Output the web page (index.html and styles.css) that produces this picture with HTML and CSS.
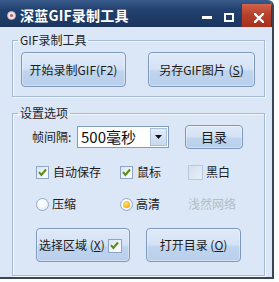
FILE: index.html
```html
<!DOCTYPE html>
<html lang="zh-CN">
<head>
<meta charset="utf-8">
<title>深蓝GIF录制工具</title>
<link rel="stylesheet" href="styles.css">
</head>
<body>
<div class="window">
  <div class="titlebar">
    <svg class="app-icon" width="9" height="9" viewBox="0 0 9 9"><circle cx="4.5" cy="4.5" r="4" fill="#e9e4e6" stroke="#b9b1b5" stroke-width="0.8"/><circle cx="4.5" cy="4.5" r="1.6" fill="#d2517a"/></svg>
    <span class="title">深蓝GIF录制工具</span>
    <div class="controls">
      <span class="ctl min"><svg width="10" height="3" viewBox="0 0 10 3"><rect width="10" height="3" fill="#fff"/></svg></span>
      <span class="ctl max"><svg width="10" height="9" viewBox="0 0 10 9"><rect x="1" y="1" width="8" height="7" fill="none" stroke="#fff" stroke-width="2"/></svg></span>
      <span class="ctl close"><svg width="10" height="10" viewBox="0 0 10 10"><path d="M1 1 L9 9 M9 1 L1 9" stroke="#fff" stroke-width="2.4" stroke-linecap="square"/></svg></span>
    </div>
  </div>
  <div class="client">
    <fieldset class="group g1">
      <legend>GIF录制工具</legend>
      <div class="rec-row">
        <button class="btn btn-rec">开始录制GIF(F2)</button>
        <button class="btn btn-save">另存GIF图片 (<u>S</u>)</button>
      </div>
    </fieldset>
    <fieldset class="group g2">
      <legend>设置选项</legend>
      <div class="interval-row">
        <span class="field-label">帧间隔:</span>
        <div class="combo">
          <span class="combo-value">500毫秒</span>
          <span class="combo-arrow"><svg width="7" height="4" viewBox="0 0 7 4"><path d="M0 0 H7 L3.5 4 Z" fill="#111"/></svg></span>
        </div>
        <button class="btn btn-dir">目录</button>
      </div>
      <div class="opt-row">
        <label class="opt"><span class="cb"><svg width="11" height="11" viewBox="0 0 11 11"><path d="M2 5.2 L4.4 8 L9 2.5" fill="none" stroke="#5d8a1e" stroke-width="2"/></svg></span>自动保存</label>
        <label class="opt"><span class="cb"><svg width="11" height="11" viewBox="0 0 11 11"><path d="M2 5.2 L4.4 8 L9 2.5" fill="none" stroke="#5d8a1e" stroke-width="2"/></svg></span>鼠标</label>
        <label class="opt opt-bw"><span class="cb cb-off"></span>黑白</label>
      </div>
      <div class="opt-row radio-row">
        <label class="opt"><span class="rb"></span>压缩</label>
        <label class="opt"><span class="rb rb-on"><span class="rb-dot"></span></span>高清</label>
        <span class="brand">浅然网络</span>
      </div>
      <div class="action-row">
        <button class="btn btn-area">选择区域 (<u>X</u>)<span class="cb cb-in"><svg width="11" height="11" viewBox="0 0 11 11"><path d="M2 5.2 L4.4 8 L9 2.5" fill="none" stroke="#5d8a1e" stroke-width="2"/></svg></span></button>
        <button class="btn btn-open">打开目录 (<u>O</u>)</button>
      </div>
    </fieldset>
  </div>
</div>
</body>
</html>
```
FILE: styles.css
```css
html, body {
  margin: 0;
  padding: 0;
  background: #ffffff;
}
body {
  font-family: "Noto Sans CJK SC", "Noto Sans", sans-serif;
  font-size: 12px;
  line-height: 14px;
  color: #1b1b1b;
}
.window {
  width: 272px;
  height: 277px;
  border-right: 2px solid #3a4656;
  border-bottom: 2px solid #3a4656;
  border-top-right-radius: 6px;
  background: #dbe7f6;
  display: flex;
  flex-direction: column;
  overflow: hidden;
}
.titlebar {
  flex: none;
  height: 27px;
  display: flex;
  align-items: center;
  background: linear-gradient(#3a5c8c 0%, #22416f 35%, #1a365f 100%);
  color: #fff;
}
.app-icon {
  margin-left: 7px;
  margin-top: 3px;
  flex: none;
}
.title {
  margin-left: 4px;
  padding-top: 2px;
  font-weight: bold;
  font-size: 14px;
  line-height: 20px;
  color: #ffffff;
  letter-spacing: 0.2px;
}
.controls {
  margin-left: auto;
  margin-right: 1px;
  display: flex;
  align-items: center;
  align-self: stretch;
}
.ctl {
  display: flex;
  align-items: center;
  justify-content: center;
}
.min {
  margin-top: 8px;
  margin-right: 12px;
}
.max {
  margin-top: 7px;
  margin-right: 7px;
}
.close {
  align-self: stretch;
  width: 30px;
  margin-top: 4px;
  padding-top: 4px;
  padding-left: 4px;
  box-sizing: border-box;
  background: linear-gradient(#d2634c 0%, #b8412c 45%, #a3301e 100%);
  border-left: 1px solid #6b2a22;
}
.client {
  flex: 1;
  padding: 6px 0 0 12px;
}
.group {
  margin: 0;
  padding: 0;
  min-width: 0;
  width: 253px;
  box-sizing: border-box;
  border: 1px solid #a5bad5;
  box-shadow: inset 1px 1px 0 #f3f7fd, 1px 1px 0 #f3f7fd;
}
.group legend {
  margin-left: 5px;
  padding: 0 2px;
  font-size: 12px;
  line-height: 14px;
  color: #1f2328;
}
.g2 {
  margin-top: 9px;
}
.btn {
  font-family: inherit;
  font-size: 12px;
  line-height: 14px;
  color: #1b1b1b;
  border: 1px solid #7e99bc;
  border-radius: 4px;
  background: linear-gradient(#dfeaf8 0%, #d3e2f5 48%, #bfd4ee 56%, #b8cfeb 100%);
  box-shadow: inset 0 0 0 1px rgba(255, 255, 255, 0.35);
  padding: 0;
  display: flex;
  align-items: center;
  justify-content: center;
  box-sizing: border-box;
}
.btn u {
  text-underline-offset: 1px;
}
.rec-row {
  display: flex;
  gap: 22px;
  padding: 5px 0 9px 8px;
}
.btn-rec {
  width: 105px;
  height: 35px;
}
.btn-save {
  width: 107px;
  height: 35px;
}
.interval-row {
  display: flex;
  align-items: center;
  padding: 5px 0 0 19px;
  height: 24px;
}
.field-label {
  width: 45px;
}
.combo {
  width: 92px;
  height: 22px;
  box-sizing: border-box;
  border: 1px solid #7f9db9;
  background: #ffffff;
  display: flex;
}
.combo-value {
  flex: 1;
  padding-left: 3px;
  font-size: 15px;
  line-height: 20px;
  color: #111;
}
.combo-arrow {
  width: 17px;
  margin: 1px;
  box-sizing: border-box;
  border: 1px solid #a9bfdc;
  background: linear-gradient(#e4edf9, #c7d9f0);
  display: flex;
  align-items: center;
  justify-content: center;
}
.btn-dir {
  margin-left: 16px;
  width: 58px;
  height: 24px;
  font-size: 13px;
}
.opt-row {
  display: grid;
  grid-template-columns: 84px 68px auto;
  align-items: center;
  height: 16px;
  margin-top: 15px;
  padding-left: 23px;
}
.radio-row {
  margin-top: 16px;
}
.opt {
  display: flex;
  align-items: center;
  gap: 4px;
}
.cb {
  flex: none;
  width: 13px;
  height: 13px;
  box-sizing: border-box;
  border: 1px solid #8ea6c5;
  background: linear-gradient(135deg, #dbe4ef 0%, #f7f9fc 80%);
  display: flex;
  align-items: center;
  justify-content: center;
}
.cb-off {
  width: 15px;
  height: 15px;
  border-color: #b9c9dd;
  background: linear-gradient(135deg, #d5e0ee, #e8eef7);
}
.opt-bw {
  gap: 3px;
}
.rb {
  flex: none;
  width: 13px;
  height: 13px;
  box-sizing: border-box;
  border-radius: 50%;
  border: 1px solid #94aac6;
  background: radial-gradient(circle at 40% 35%, #ffffff 0%, #f4f6fa 50%, #d6deea 100%);
  display: flex;
  align-items: center;
  justify-content: center;
  margin-right: -1px;
}
.rb-dot {
  width: 7px;
  height: 7px;
  border-radius: 50%;
  background: radial-gradient(circle at 40% 35%, #ffe27a 0%, #f6b81c 60%, #d78a06 100%);
}
.brand {
  color: #b3bcc8;
  margin-left: 0;
}
.action-row {
  display: flex;
  gap: 16px;
  margin-top: 16px;
  padding: 0 0 13px 23px;
}
.btn-area {
  width: 94px;
  height: 34px;
  justify-content: flex-start;
  padding-left: 2px;
}
.cb-in {
  width: 14px;
  height: 14px;
  margin-left: 3px;
  margin-top: 1px;
}
.btn-open {
  width: 95px;
  height: 34px;
}
```
